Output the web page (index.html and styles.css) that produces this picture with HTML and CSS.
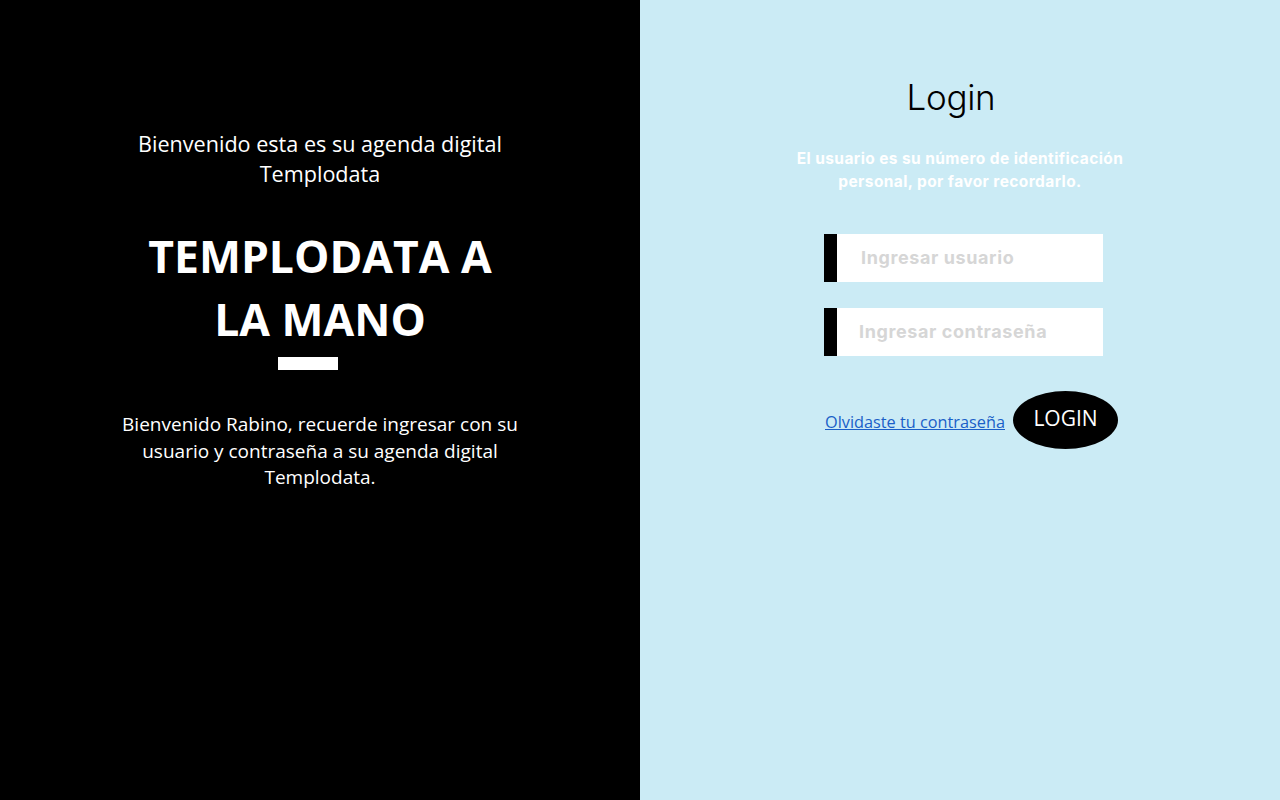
FILE: index.html
```html
<!DOCTYPE html>
<html lang="es">
<head>
  <meta charset="UTF-8">
  <meta name="viewport" content="width=device-width, initial-scale=1.0">
  <title>Templodata - Login</title>
  <link rel="stylesheet" href="styles.css">
</head>
<body>

  <div class="page">
    <div class="left">
      <p class="welcome">Bienvenido esta es su agenda digital Templodata</p>
      <h1>TEMPLODATA A<br>LA MANO</h1>
      <div class="bar"></div>
      <p class="info">Bienvenido Rabino, recuerde ingresar con su usuario y contraseña a su agenda digital Templodata.</p>
    </div>

    <div class="right">
      <h2 class="title">Login</h2>
      <p class="hint">El usuario es su número de identificación personal, por favor recordarlo.</p>

      <form class="login-form" onsubmit="return false">
        <input type="text" class="field" placeholder="Ingresar usuario">
        <input type="password" class="field field-pass" placeholder="Ingresar contraseña">
        <div class="actions">
          <a href="#" class="forgot">Olvidaste tu contraseña</a>
          <button type="submit" class="login-btn">LOGIN</button>
        </div>
      </form>
    </div>
  </div>

</body>
</html>
```

FILE: styles.css
```css
html, body {
  margin: 0;
  padding: 0;
  height: 100%;
}

.page {
  display: flex;
  height: 100%;
}

/* Lado izquierdo */
.left {
  width: 640px;
  background: #000;
  color: #fff;
  font-family: 'Open Sans', sans-serif;
  text-align: center;
  display: flex;
  flex-direction: column;
  align-items: center;
  padding-top: 129px;
  box-sizing: border-box;
}

.welcome {
  margin: 0;
  width: 400px;
  font-size: 21.6px;
  line-height: 30px;
}

h1 {
  margin: 35px 0 0;
  font-size: 44.5px;
  font-weight: 700;
  line-height: 63px;
}

.bar {
  width: 60px;
  height: 13px;
  background: #fff;
  margin: 7px 24px 0 0;
}

.info {
  margin: 41px 0 0;
  width: 420px;
  font-size: 19px;
  line-height: 26.5px;
}

/* Lado derecho */
.right {
  width: 640px;
  background: #cbebf5;
  display: flex;
  flex-direction: column;
  align-items: center;
  font-family: 'Inter', sans-serif;
  padding-top: 74px;
  box-sizing: border-box;
}

.title {
  margin: 0 18px 0 0;
  font-family: 'Inter', sans-serif;
  font-weight: 300;
  font-size: 35px;
  line-height: 46px;
  letter-spacing: -0.3px;
  color: #000;
}

.hint {
  margin: 27px 0 0;
  width: 340px;
  color: #fff;
  font-size: 15.5px;
  font-weight: 700;
  line-height: 23px;
  letter-spacing: 0.4px;
  text-align: center;
}

.login-form {
  display: flex;
  flex-direction: column;
  align-items: flex-start;
  width: 294px;
  margin: 41px 0 0 22px;
}

.field {
  width: 279px;
  height: 48px;
  box-sizing: border-box;
  border: none;
  border-left: 13px solid #000;
  background: #fff;
  padding: 0 0 2px 24px;
  font-family: 'Inter', sans-serif;
  font-size: 18px;
  font-weight: 700;
  letter-spacing: 0.6px;
  outline: none;
  margin-bottom: 26px;
}

.field-pass {
  padding-left: 22px;
}

.field::placeholder {
  color: #d6d6d6;
}

.actions {
  display: flex;
  align-items: center;
  gap: 8px;
  margin-top: 9px;
}

.forgot {
  font-family: 'Open Sans', sans-serif;
  font-size: 16.3px;
  color: #1a5fc8;
  text-decoration: underline;
  margin: 4px 0 0 1px;
}

.login-btn {
  width: 105px;
  height: 58px;
  border: none;
  border-radius: 50%;
  background: #000;
  color: #fff;
  font-family: 'Open Sans', sans-serif;
  font-size: 21px;
  cursor: pointer;
  padding: 0 0 4px;
}
```
